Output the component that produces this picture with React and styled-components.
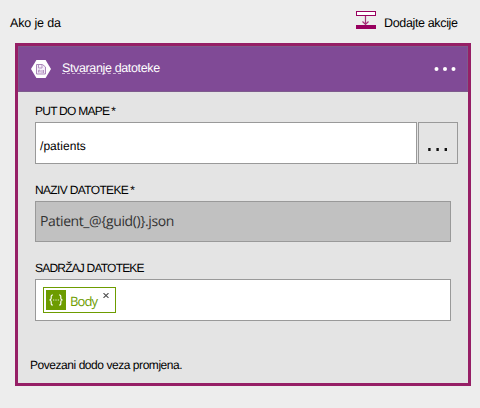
import React from "react";
import styled, { createGlobalStyle } from "styled-components";

const GlobalStyle = createGlobalStyle`
  * { box-sizing: border-box; }
  body { margin: 0; background: #ededed; }
`;

const Page = styled.main`
  width: 480px;
  height: 408px;
  overflow: hidden;
  background: #ededed;
  color: #000;
  font-family: "Liberation Sans", Arial, sans-serif;
  font-size: 12.5px;
  line-height: 16px;
  white-space: nowrap;
  text-rendering: geometricPrecision;
`;

const TopBar = styled.div`
  display: flex;
  align-items: flex-start;
  justify-content: space-between;
  height: 43px;
  padding: 11px 22px 0 10px;
`;

const Text = styled.span`
  display: block;
  font-size: ${(p) => p.$size || 12.5}px;
  letter-spacing: ${(p) => p.$spacing || 0}px;
`;

const AddAction = styled.div`
  display: flex;
  width: 102px;
  gap: 8px;
  svg { flex: none; }
`;

const TopLabel = styled(Text)`
  margin-top: 4px;
`;

const Card = styled.section`
  width: 456px;
  height: 343px;
  margin-left: 15px;
  border: 3px solid #961f66;
  background: #e4e4e4;
`;

const CardHeader = styled.header`
  display: flex;
  align-items: center;
  height: 46px;
  padding: 0 11px 0 12px;
  border: 1px solid #7e5b8d;
  background: #804a96;
  color: #fff;
`;

const Title = styled(Text)`
  margin: -2px auto 0 11px;
`;

const Underlined = styled.span`
  text-decoration: underline dashed 1px #cdb6d6;
  text-underline-offset: 1px;
  text-decoration-skip-ink: none;
`;

const Body = styled.div`
  padding: 11px 10px 0 17px;
`;

const Label = styled(Text)`
  height: 16px;
  margin-top: ${(p) => p.$top || 0}px;
`;

const Required = styled.span`
  margin-left: 2px;
`;

const FieldRow = styled.div`
  display: flex;
  gap: 1px;
  margin-top: ${(p) => p.$top}px;
`;

const Field = styled.div`
  display: flex;
  align-items: center;
  width: ${(p) => p.$width || 416}px;
  height: ${(p) => p.$height || 42}px;
  padding: 0 4px;
  border: 1px solid #999;
  background: ${(p) => (p.$disabled ? "#c1c1c1" : "#fff")};
`;

const FieldValue = styled(Text)`
  padding-top: 5px;
`;

const DisabledValue = styled(Text)`
  padding-top: 1px;
  color: #333;
  font-family: "Open Sans", "Noto Sans", sans-serif;
`;

const BrowseButton = styled.button`
  display: flex;
  align-items: center;
  justify-content: center;
  width: 40px;
  height: 42px;
  padding: 0;
  border: 1px solid #999;
  background: #e4e4e4;
`;

const Token = styled.div`
  display: flex;
  align-items: center;
  width: 73px;
  height: 26px;
  margin-left: 3px;
  padding-left: 2px;
  border: 1px solid #6d9c00;
  background: #fff;
  color: #6d9c00;
  svg { flex: none; }
`;

const TokenLabel = styled(Text)`
  width: 33px;
  margin-left: 4px;
  padding-top: 1px;
  font-family: "Open Sans", "Noto Sans", sans-serif;
`;

const Remove = styled.svg`
  margin-bottom: 9px;
`;

const Footer = styled(Text)`
  margin: 36px 0 0 -5px;
`;

function InsertIcon() {
  return (
    <svg width="20" height="18" viewBox="0 0 20 18">
      <rect x=".5" y=".5" width="19" height="4" fill="#fff" stroke="#98005f" />
      <path d="M9.5 5v8M6.5 10.5l3 3 3-3" fill="none" stroke="#a52d78" strokeWidth="1.2" />
      <path d="M0 14h20v4H0z" fill="#98005f" />
    </svg>
  );
}

function FileIcon() {
  return (
    <svg width="20" height="18" viewBox="0 0 20 18">
      <path d="M5.4 0h9.2L20 9l-5.4 9H5.4L0 9z" fill="#fff" />
      <path d="M5.5 4.5h6l3 2.5v7h-9z" fill="#f5effa" stroke="#ab86b9" />
      <path d="M7.5 5v3H11V5M7.5 12.5v-2.3H9v2.3M11 10v3M12.5 10v3" fill="none" stroke="#b595c2" />
    </svg>
  );
}

function BracesIcon() {
  return (
    <svg width="20" height="20" viewBox="0 0 20 20">
      <path d="M0 0h20v20H0z" fill="#6d9c00" />
      <path
        d="M7 5H6.3Q5.2 5 5.2 6.3v2Q5.2 9.8 3.5 10q1.7.2 1.7 1.7v2Q5.2 15 6.3 15H7M13 5h.7q1.1 0 1.1 1.3v2q0 1.5 1.7 1.7-1.7.2-1.7 1.7v2q0 1.3-1.1 1.3H13"
        fill="none" stroke="#fff" strokeWidth="1.15"
      />
      <path d="M7.2 9.5h1v1h-1zM9.5 9.5h1v1h-1zM11.8 9.5h1v1h-1z" fill="#fff" />
    </svg>
  );
}

function MoreIcon() {
  return (
    <svg width="22" height="6" viewBox="0 0 22 6">
      <g fill="#fff">
        <circle cx="2.5" cy="3" r="2" />
        <circle cx="11" cy="3" r="2" />
        <circle cx="19.5" cy="3" r="2" />
      </g>
    </svg>
  );
}

function BrowseDots() {
  return (
    <svg width="20" height="15" viewBox="0 0 20 15">
      <path d="M.2 12h2.4v3H.2zM8.4 12h2.4v3H8.4zM16.6 12H19v3h-2.4z" fill="#111" />
    </svg>
  );
}

export default function App() {
  return (
    <>
      <GlobalStyle />
      <Page>
        <TopBar>
          <TopLabel $spacing={-0.15}>Ako je da</TopLabel>
          <AddAction>
            <InsertIcon />
            <TopLabel $spacing={-0.35}>Dodajte akcije</TopLabel>
          </AddAction>
        </TopBar>
        <Card>
          <CardHeader>
            <FileIcon />
            <Title $spacing={-0.36}>
              <Underlined>Stvaranje d</Underlined>atoteke
            </Title>
            <MoreIcon />
          </CardHeader>
          <Body>
            <Label $size={12} $spacing={-0.75}>PUT DO MAPE<Required>*</Required></Label>
            <FieldRow $top={3}>
              <Field $width={382}>
                <FieldValue $size={12} $spacing={0.05}>/patients</FieldValue>
              </Field>
              <BrowseButton aria-label="Browse"><BrowseDots /></BrowseButton>
            </FieldRow>
            <Label $top={18} $size={12} $spacing={-0.65}>NAZIV DATOTEKE<Required>*</Required></Label>
            <FieldRow $top={3}>
              <Field $height={41} $disabled>
                <DisabledValue $size={14} $spacing={-0.4}>Patient_@&#123;guid()&#125;.json</DisabledValue>
              </Field>
            </FieldRow>
            <Label $top={18} $size={12} $spacing={-0.8}>SADRŽAJ DATOTEKE</Label>
            <FieldRow $top={3}>
              <Field>
                <Token>
                  <BracesIcon />
                  <TokenLabel $size={13} $spacing={-0.85}>Body</TokenLabel>
                  <Remove width="6" height="5" viewBox="0 0 6 5">
                    <path d="M.5.2l5 4.6m0-4.6l-5 4.6" stroke="#444" strokeWidth="1.1" />
                  </Remove>
                </Token>
              </Field>
            </FieldRow>
            <Footer $size={12} $spacing={-0.45}>Povezani dodo veza promjena.</Footer>
          </Body>
        </Card>
      </Page>
    </>
  );
}
